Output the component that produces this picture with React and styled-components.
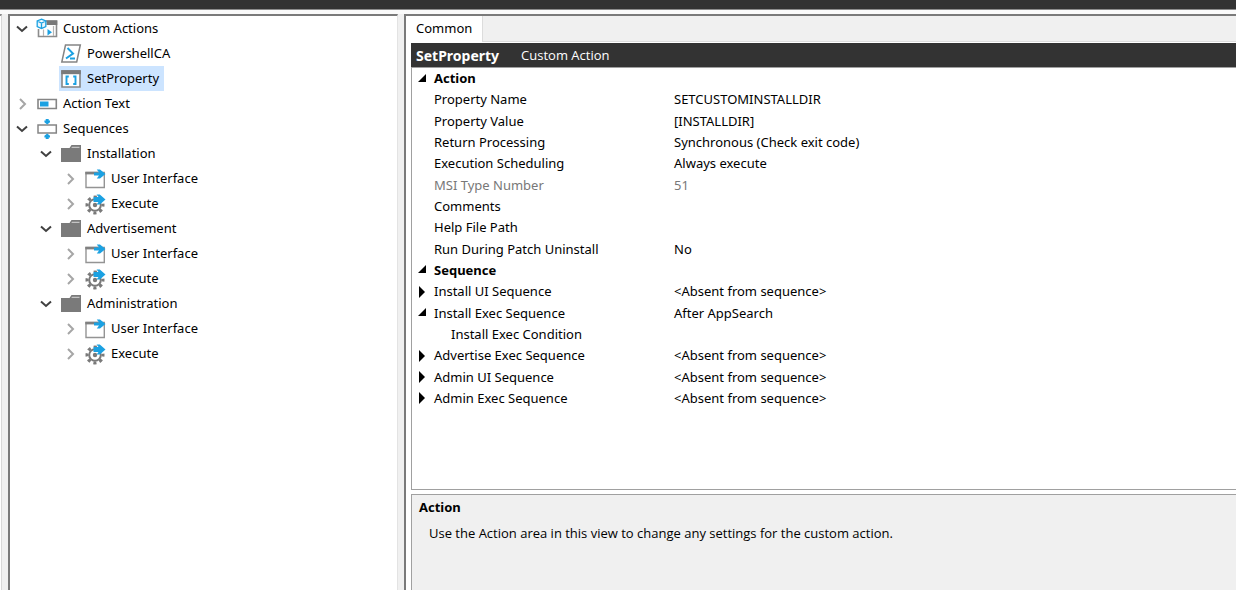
import React, { useState } from 'react';
import styled, { createGlobalStyle } from 'styled-components';

const GlobalStyle = createGlobalStyle`
  * {
    box-sizing: border-box;
  }
  body {
    margin: 0;
    background: #fafafa;
    color: #000000;
    font-family: 'Noto Sans', 'Open Sans', sans-serif;
    font-size: 13px;
    line-height: 21px;
  }
  button {
    padding: 0;
    border: 0;
    background: none;
    color: inherit;
    font: inherit;
    text-align: left;
  }
`;

const Page = styled.div`
  display: flex;
  flex-direction: column;
  min-height: 100vh;
`;

const TopBar = styled.header`
  height: 10px;
  background: #333333;
  border-bottom: 1px solid #8c8c8c;
`;

const Workspace = styled.main`
  display: flex;
  flex: 1;
  padding-top: 4px;
`;

const PanelEdge = styled.div`
  width: 2px;
  background: #ffffff;
  border-top: 2px solid #8c8c8c;
  border-right: 1px solid #d8d8d8;
`;

const Gutter = styled.div`
  width: 6px;
  background: #f0f0f0;
`;

const TreePanel = styled.nav`
  flex: 0 0 390px;
  padding-left: 4px;
  background: #ffffff;
  border-top: 2px solid #7a7a7a;
  border-left: 2px solid #7a7a7a;
  border-right: 1px solid #e3e3e3;
`;

const TreeList = styled.ul`
  list-style: none;
  margin: 0;
  padding: 0 0 0 ${props => (props.$nested ? '24px' : '0')};
`;

const TreeRow = styled.div`
  display: flex;
  align-items: center;
  height: 25px;
`;

const Toggle = styled.button`
  display: flex;
  align-items: center;
  justify-content: center;
  width: 16px;
  height: 25px;
`;

const TogglePlaceholder = styled.span`
  width: 16px;
`;

const TreeItem = styled.button`
  display: flex;
  align-items: center;
  gap: 5px;
  height: 25px;
  margin-left: 5px;
  padding: 0 5px 0 1px;
  white-space: nowrap;
  background: ${props => (props.$selected ? '#cce4ff' : 'transparent')};
`;

const DetailPanel = styled.section`
  display: flex;
  flex-direction: column;
  flex: 1;
  min-width: 0;
  background: #ffffff;
  border-top: 2px solid #7a7a7a;
  border-left: 2px solid #7a7a7a;
`;

const TabStrip = styled.div`
  display: flex;
  height: 26px;
  background: #f0f0f0;
  border-bottom: 1px solid #dcdcdc;
`;

const Tab = styled.button`
  height: 26px;
  padding: 0 10px 2px;
  background: #ffffff;
  border-right: 1px solid #dcdcdc;
`;

const DetailBody = styled.div`
  display: flex;
  flex-direction: column;
  flex: 1;
  padding: 1px 0 0 5px;
`;

const TitleBar = styled.div`
  display: flex;
  align-items: center;
  gap: 22px;
  height: 24px;
  padding-left: 5px;
  background: #333333;
  color: #ffffff;
`;

const Title = styled.h1`
  margin: 0;
  font-size: 14px;
  font-weight: 700;
`;

const Subtitle = styled.span`
  font-family: 'Open Sans', sans-serif;
`;

const GridBox = styled.div`
  flex: 1;
  border: 1px solid #a0a0a0;
  border-right: 0;
`;

const Grid = styled.table`
  width: 100%;
  height: 341px;
  border-collapse: collapse;
  table-layout: fixed;
`;

const NameCell = styled.th`
  width: 262px;
  padding: 0;
  color: ${props => (props.$muted ? '#787878' : 'inherit')};
  font-weight: ${props => (props.$bold ? 700 : 400)};
  text-align: left;
  white-space: nowrap;
`;

const NameContent = styled.div`
  display: flex;
  align-items: center;
  padding-left: ${props => (props.$indent ? '22px' : '5px')};
`;

const Marker = styled.button`
  display: flex;
  align-items: center;
  width: 17px;
  height: 21px;
`;

const MarkerSpace = styled.span`
  width: 17px;
`;

const ValueCell = styled.td`
  padding: 0;
  color: ${props => (props.$muted ? '#787878' : 'inherit')};
`;

const HelpBox = styled.aside`
  height: 96px;
  margin-top: 4px;
  padding: 2px 7px;
  background: #f0f0f0;
  border-top: 1px solid #a0a0a0;
  border-left: 1px solid #a0a0a0;
`;

const HelpTitle = styled.h2`
  margin: 0;
  font-size: 13px;
  font-weight: 700;
`;

const HelpText = styled.p`
  margin: 5px 0 0 10px;
  font-family: 'Open Sans', sans-serif;
`;

const Chevron = ({ open }) => (
  <svg width="14" height="14" viewBox="0 0 14 14" fill="none">
    {open
      ? <path d="M2 4.5 7 9l5-4.5" stroke="#404040" strokeWidth="2" />
      : <path d="m5 2 5 5-5 5" stroke="#a6a6a6" strokeWidth="2" />}
  </svg>
);

const Arrow = () => (
  <path d="M10 4.5h5L12.8 1.5H16L21.5 6 16 10.5h-3.2L15 7.5h-5z" fill="#1ba1e2" />
);

const icons = {
  actions: (
    <>
      <path d="M10 3h10.5v15.5H2.5V11" fill="#ffffff" stroke="#8c8c8c" strokeWidth="1.6" />
      <path d="M10.5 2.5h10.8v4.5H10.5z" fill="#7a7a7a" />
      <path d="M7.5 11.5V18M17.5 8v10" stroke="#b4b4b4" strokeWidth="1.2" />
      <path d="M5.5 1.2 9.8 3v5.5l-4.3 2-4.3-2V3zM1.2 3l4.3 2 4.3-2M5.5 5v5.5" fill="#eaf7fd" stroke="#1ba1e2" strokeWidth="1.3" />
      <path d="M11.5 11v6.5l4.5-3.2z" fill="#1ba1e2" />
    </>
  ),
  powershell: (
    <>
      <path d="M5.5 2H20.3l-3.6 17H1.8z" fill="#ffffff" stroke="#858585" strokeWidth="1.5" />
      <path d="m7.5 5 5.5 5.5-7 5M10 15.5h5" fill="none" stroke="#1ba1e2" strokeWidth="2" />
    </>
  ),
  property: (
    <>
      <path d="M2 3h18v16H2z" fill="#ffffff" stroke="#858585" strokeWidth="1.6" />
      <path d="M1.2 2.2h19.6v4H1.2z" fill="#7a7a7a" />
      <path d="M8.8 8.5H6.5V16h2.3M13.2 8.5h2.3V16h-2.3" fill="none" stroke="#1ba1e2" strokeWidth="1.9" />
    </>
  ),
  text: (
    <>
      <path d="M2 6.5h18.3v9H2z" fill="#ffffff" stroke="#858585" strokeWidth="1.6" />
      <path d="M4 8.5h8.5v5H4z" fill="#1ba1e2" />
    </>
  ),
  sequences: (
    <>
      <path d="M2 7h18.3v8H2z" fill="#ffffff" stroke="#858585" strokeWidth="1.5" />
      <path d="M9.7 1h3v1.5H14v1.7L11.2 6.5 8.4 4.2V2.5h1.3zM9.7 21h3v-1.5H14v-1.7l-2.8-2.3-2.8 2.3v1.7h1.3z" fill="#1ba1e2" />
    </>
  ),
  folder: (
    <>
      <path d="M1 5h8.5l2-3H21v17H1z" fill="#7a7a7a" />
      <path d="M12 3.8h7.5V5h-8.2z" fill="#c4c4c4" />
    </>
  ),
  window: (
    <>
      <path d="M2 4.5h18.3v15H2z" fill="#ffffff" stroke="#949494" strokeWidth="1.4" />
      <path d="M1.3 3.8H14v2.6H1.3z" fill="#808080" />
      <Arrow />
    </>
  ),
  gear: (
    <>
      <circle cx="11" cy="12" r="8" fill="none" stroke="#7a7a7a" strokeWidth="3" strokeDasharray="3.14 3.14" strokeDashoffset="1.57" />
      <circle cx="11" cy="12" r="5.8" fill="#ffffff" stroke="#7a7a7a" strokeWidth="2" />
      <circle cx="11" cy="12" r="2.2" fill="#7a7a7a" />
      <path d="M9.5 4h5L12.6 1.5h3.2L21.5 6.5 15.8 11.5h-3.2L14.5 9h-5z" fill="#1ba1e2" />
    </>
  ),
};

const Icon = ({ name }) => (
  <svg width="22" height="22" viewBox="0 0 22 22" aria-hidden="true">{icons[name]}</svg>
);

const sequenceChildren = [
  { label: 'User Interface', icon: 'window', expandable: true },
  { label: 'Execute', icon: 'gear', expandable: true },
];

const tree = [
  {
    label: 'Custom Actions',
    icon: 'actions',
    expandable: true,
    children: [
      { label: 'PowershellCA', icon: 'powershell' },
      { label: 'SetProperty', icon: 'property', selected: true },
    ],
  },
  { label: 'Action Text', icon: 'text', expandable: true },
  {
    label: 'Sequences',
    icon: 'sequences',
    expandable: true,
    children: [
      { label: 'Installation', icon: 'folder', expandable: true, children: sequenceChildren },
      { label: 'Advertisement', icon: 'folder', expandable: true, children: sequenceChildren },
      { label: 'Administration', icon: 'folder', expandable: true, children: sequenceChildren },
    ],
  },
];

const absent = '<Absent from sequence>';

const properties = [
  { name: 'Action', bold: true, marker: 'open' },
  { name: 'Property Name', value: 'SETCUSTOMINSTALLDIR' },
  { name: 'Property Value', value: '[INSTALLDIR]' },
  { name: 'Return Processing', value: 'Synchronous (Check exit code)' },
  { name: 'Execution Scheduling', value: 'Always execute' },
  { name: 'MSI Type Number', value: '51', muted: true },
  { name: 'Comments' },
  { name: 'Help File Path' },
  { name: 'Run During Patch Uninstall', value: 'No' },
  { name: 'Sequence', bold: true, marker: 'open' },
  { name: 'Install UI Sequence', value: absent, marker: 'closed' },
  { name: 'Install Exec Sequence', value: 'After AppSearch', marker: 'open' },
  { name: 'Install Exec Condition', indent: true },
  { name: 'Advertise Exec Sequence', value: absent, marker: 'closed' },
  { name: 'Admin UI Sequence', value: absent, marker: 'closed' },
  { name: 'Admin Exec Sequence', value: absent, marker: 'closed' },
];

const TreeNode = ({ node }) => {
  const [open, setOpen] = useState(Boolean(node.children));

  return (
    <li>
      <TreeRow>
        {node.expandable
          ? (
            <Toggle aria-label={`Toggle ${node.label}`} aria-expanded={open} onClick={() => setOpen(!open)}>
              <Chevron open={open} />
            </Toggle>
          )
          : <TogglePlaceholder />}
        <TreeItem $selected={node.selected}>
          <Icon name={node.icon} />
          {node.label}
        </TreeItem>
      </TreeRow>
      {open && node.children && (
        <TreeList $nested>
          {node.children.map(child => <TreeNode key={child.label} node={child} />)}
        </TreeList>
      )}
    </li>
  );
};

const PropertyRow = ({ item }) => (
  <tr>
    <NameCell scope="row" $bold={item.bold} $muted={item.muted}>
      <NameContent $indent={item.indent}>
        {item.marker
          ? (
            <Marker aria-label={`Toggle ${item.name}`}>
              <svg width="10" height="12" viewBox="0 0 10 12">
                <path d={item.marker === 'open' ? 'M9 1v8H1z' : 'M2 0v12l6-6z'} fill="#000000" />
              </svg>
            </Marker>
          )
          : <MarkerSpace />}
        {item.name}
      </NameContent>
    </NameCell>
    <ValueCell $muted={item.muted}>{item.value}</ValueCell>
  </tr>
);

const App = () => (
  <>
    <GlobalStyle />
    <Page>
      <TopBar />
      <Workspace>
        <PanelEdge />
        <Gutter />
        <TreePanel>
          <TreeList>
            {tree.map(node => <TreeNode key={node.label} node={node} />)}
          </TreeList>
        </TreePanel>
        <Gutter />
        <DetailPanel>
          <TabStrip role="tablist">
            <Tab role="tab" aria-selected="true">Common</Tab>
          </TabStrip>
          <DetailBody>
            <TitleBar>
              <Title>SetProperty</Title>
              <Subtitle>Custom Action</Subtitle>
            </TitleBar>
            <GridBox>
              <Grid>
                <tbody>
                  {properties.map(item => <PropertyRow key={item.name} item={item} />)}
                </tbody>
              </Grid>
            </GridBox>
            <HelpBox>
              <HelpTitle>Action</HelpTitle>
              <HelpText>Use the Action area in this view to change any settings for the custom action.</HelpText>
            </HelpBox>
          </DetailBody>
        </DetailPanel>
      </Workspace>
    </Page>
  </>
);

export default App;
